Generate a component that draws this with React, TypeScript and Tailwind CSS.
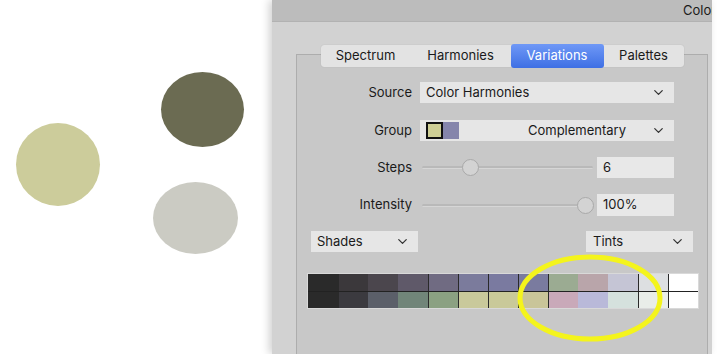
import { ChevronDown } from 'lucide-react'

const topRow = [
  '#2a2a2a', '#3b383b', '#4b464d', '#5f5969', '#706b82', '#7b7b9c', '#7a7aa0', '#7a7b9f',
  '#9bab92', '#b9a5aa', '#c5c5d5', '#dddfe1', '#ffffff',
]
const bottomRow = [
  '#2a2a2a', '#3b3a3f', '#5b5f69', '#718579', '#8ba182', '#c9c99b', '#c9c999', '#c9c599',
  '#c9a9b9', '#b9b9d9', '#d5e1dd', '#e9ede9', '#ffffff',
]
// columns that get a dark divider on their left edge
const divided = [1, 4, 5, 6, 7, 8, 11, 12]

function Select({ children, className = '' }: { children: React.ReactNode; className?: string }) {
  return (
    <div className={`h-[21px] bg-[#e6e6e6] flex items-center pl-[6px] pr-[8px] ${className}`}>
      <div className="flex-1 flex items-center min-w-0">{children}</div>
      <ChevronDown size={15} strokeWidth={2} className="text-[#333]" />
    </div>
  )
}

function Slider({ pos }: { pos: number }) {
  return (
    <div className="relative w-[171px] h-[21px] flex items-center">
      <div className="w-full h-[3px] rounded-full bg-[#b9b9b9] border-b border-[#d6d6d6]" />
      <div
        className="absolute top-[2px] w-[17px] h-[17px] rounded-full bg-[#d3d3d3] border border-[#a9a9a9]"
        style={{ left: pos - 8 }}
      />
    </div>
  )
}

function Row({ label, children, mt }: { label: string; children: React.ReactNode; mt: string }) {
  return (
    <div className={`flex items-center ${mt}`}>
      <div className="w-[116px] text-right pr-[1px] text-[13px] text-[#1a1a1a]">{label}</div>
      <div className="ml-[7px] flex items-center">{children}</div>
    </div>
  )
}

const tabs = [
  { name: 'Spectrum', w: 'w-[90px]' },
  { name: 'Harmonies', w: 'w-[100px]' },
  { name: 'Variations', w: 'w-[93px]', active: true },
  { name: 'Palettes', w: 'w-[80px]' },
]

export default function App() {
  return (
    <div
      className="relative w-[720px] h-[354px] bg-white overflow-hidden flex"
      style={{ fontFamily: 'Inter, "Noto Sans", sans-serif' }}
    >
      {/* color dots on the canvas */}
      <div className="relative w-[272px] h-full">
        <div className="absolute left-[16px] top-[123px] w-[84px] h-[83px] rounded-[50%] bg-[#cccc9b]" />
        <div className="absolute left-[161px] top-[72px] w-[83px] h-[75px] rounded-[50%] bg-[#6b6b52]" />
        <div className="absolute left-[153px] top-[182px] w-[85px] h-[72px] rounded-[50%] bg-[#cbcbc3]" />
      </div>

      {/* Color panel */}
      <div className="w-[440px] h-full flex flex-col shadow-[-3px_0_8px_rgba(0,0,0,0.18)]">
        <div className="h-[22px] bg-[#bcbcbc] border-b border-[#b2b2b2] flex items-center pl-[411px] overflow-hidden whitespace-nowrap text-[13px] text-[#1a1a1a]">
          Color
        </div>
        <div className="flex-1 bg-[#d2d2d2] pl-[24px] pr-[4px] pt-[23px] flex flex-col">
          <div className="relative z-10 flex justify-center">
            <div className="flex h-[22px] rounded-[3px] bg-[#e3e3e3] shadow-[0_0_1px_rgba(0,0,0,0.2)]">
              {tabs.map((t) =>
                t.active ? (
                  <div
                    key={t.name}
                    className={`${t.w} -my-[1px] flex items-center justify-center rounded-[3px] bg-gradient-to-b from-[#6f98f6] to-[#3e6fe4] text-white text-[13px]`}
                  >
                    {t.name}
                  </div>
                ) : (
                  <div key={t.name} className={`${t.w} flex items-center justify-center text-[13px] text-[#1a1a1a]`}>
                    {t.name}
                  </div>
                )
              )}
            </div>
          </div>
          <div className="-mt-[13px] flex-1 bg-[#c8c8c8] border border-[#adadad] border-b-0 flex flex-col">
            <Row label="Source" mt="mt-[27px]">
              <Select className="w-[254px]">
                <span className="text-[13px] text-[#1a1a1a]">Color Harmonies</span>
              </Select>
            </Row>
            <Row label="Group" mt="mt-[17px]">
              <Select className="w-[254px] pl-[4px]">
                <div className="flex h-[17px]">
                  <div className="w-[17px] h-[17px] bg-[#cfcf95] border-2 border-[#111]" />
                  <div className="w-[16px] h-[17px] bg-[#8585ab]" />
                </div>
                <span className="ml-auto mr-[25px] text-[13px] text-[#1a1a1a]">Complementary</span>
              </Select>
            </Row>
            <Row label="Steps" mt="mt-[16px]">
              <div className="ml-[2px]">
                <Slider pos={48} />
              </div>
              <div className="ml-[4px] w-[77px] h-[21px] bg-[#e8e8e8] flex items-center pl-[6px] text-[13px] text-[#1a1a1a]">
                6
              </div>
            </Row>
            <Row label="Intensity" mt="mt-[16px]">
              <div className="ml-[2px]">
                <Slider pos={163} />
              </div>
              <div className="ml-[4px] w-[77px] h-[22px] bg-[#e8e8e8] flex items-center pl-[6px] text-[13px] text-[#1a1a1a]">
                100%
              </div>
            </Row>
            <div className="mt-[15px] flex justify-between px-[14px]">
              <Select className="w-[107px] pl-[5px] pr-[6px]">
                <span className="text-[13px] text-[#1a1a1a]">Shades</span>
              </Select>
              <Select className="w-[107px] pl-[7px] pr-[5px]">
                <span className="text-[13px] text-[#1a1a1a]">Tints</span>
              </Select>
            </div>
            <div className="mt-[21px] ml-[10px] w-[392px] p-[1px] bg-[#d9d9d9]">
              {[topRow, bottomRow].map((row, r) => (
                <div key={r} className={`flex h-[17px] ${r === 1 ? 'border-t border-[#222]' : ''}`}>
                  {row.map((c, i) => (
                    <div
                      key={i}
                      className={`w-[30px] h-full ${divided.includes(i) ? 'border-l border-[#2a2a2a]' : ''}`}
                      style={{ background: c }}
                    />
                  ))}
                </div>
              ))}
            </div>
          </div>
        </div>
      </div>

      {/* highlight ring */}
      <svg className="absolute left-[517px] top-[253px]" width="146" height="90" viewBox="0 0 146 90">
        <ellipse cx="73" cy="45" rx="70" ry="41" fill="none" stroke="#f4f41c" strokeWidth="5" />
      </svg>
    </div>
  )
}
